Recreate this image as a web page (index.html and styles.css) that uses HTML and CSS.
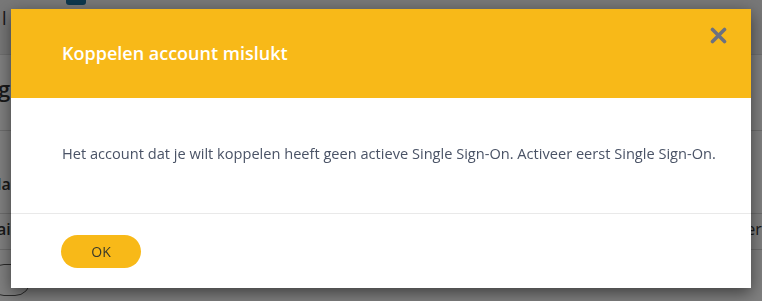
FILE: index.html
```html
<!DOCTYPE html>
<html lang="nl">
<head>
<meta charset="utf-8">
<title>Koppelen account mislukt</title>
<link rel="stylesheet" href="styles.css">
</head>
<body>
<div class="page">
  <div class="topbar">
    <span class="topbar-text">l</span>
    <span class="tab"></span>
  </div>
  <div class="page-title">gl</div>
  <div class="row row-line"></div>
  <div class="row row-label">la</div>
  <div class="row row-data"><span>ai</span><span>er.</span></div>
  <div class="row row-btn"><span class="ghost-btn">zi</span></div>
</div>

<div class="overlay">
  <div class="modal" role="dialog" aria-labelledby="modal-title">
    <div class="modal-header">
      <h2 id="modal-title" class="modal-title">Koppelen account mislukt</h2>
      <button class="close" aria-label="Sluiten">
        <svg width="17" height="17" viewBox="0 0 17 17" aria-hidden="true">
          <path d="M2.5 2.5 L14.5 14.5 M14.5 2.5 L2.5 14.5" stroke="#6c7180" stroke-width="3.6" stroke-linecap="round"/>
        </svg>
      </button>
    </div>
    <div class="modal-body">
      <p>Het account dat je wilt koppelen heeft geen actieve Single Sign-On. Activeer eerst Single Sign-On.</p>
    </div>
    <div class="modal-footer">
      <button class="btn-ok">OK</button>
    </div>
  </div>
</div>
</body>
</html>
```

FILE: styles.css
```css
* { box-sizing: border-box; }
html, body { margin: 0; height: 100%; }
body {
  font-family: "Open Sans", "Noto Sans", sans-serif;
  background: #ffffff;
  color: #333;
  overflow: hidden;
}

/* background page */
.page { display: flex; flex-direction: column; height: 100%; }
.topbar {
  height: 55px;
  background: #eeeeee;
  border-bottom: 1px solid #dddddd;
  display: flex;
  align-items: flex-start;
  padding-left: 2px;
}
.topbar-text { font-size: 18px; margin-top: 6px; color: #333; }
.tab { width: 20px; height: 5px; background: #1b6f99; margin-left: 59px; border-radius: 0 0 3px 3px; }
.page-title { font-size: 22px; font-weight: 600; padding: 18px 0 0 0; height: 76px; border-bottom: 1px solid #d8d8d8; margin-left: -2px; }
.row { border-bottom: 1px solid #d8d8d8; font-size: 16px; display: flex; justify-content: space-between; align-items: center; }
.row-line { height: 0; border: none; }
.row-label { height: 83px; font-weight: 600; margin-left: -3px; padding-top: 24px; }
.row-data { height: 36px; font-weight: 600; margin-left: -3px; padding-bottom: 6px; }
.row-data span:last-child { font-weight: 400; margin-right: -4px; }
.row-btn { border: none; padding-top: 14px; }
.ghost-btn { border: 1px solid #555; border-radius: 16px; padding: 4px 30px 6px 0; margin-left: -12px; font-size: 15px; }

/* overlay + modal */
.overlay {
  position: fixed;
  inset: 0;
  background: rgba(0, 0, 0, 0.5);
  padding: 9px 11px 0 11px;
}
.modal {
  width: 740px;
  height: 279px;
  background: #ffffff;
  display: flex;
  flex-direction: column;
  box-shadow: 0 5px 15px rgba(0, 0, 0, 0.5);
}
.modal-header {
  height: 89px;
  background: #f8b918;
  display: flex;
  align-items: flex-start;
  justify-content: space-between;
  padding: 0 24px 0 51px;
}
.modal-title {
  margin: 0;
  padding-top: 31px;
  font-size: 18px;
  font-weight: 600;
  color: #ffffff;
  line-height: 26px;
}
.close {
  margin-top: 18px;
  border: 0;
  background: none;
  padding: 0;
  width: 17px;
  height: 17px;
  cursor: pointer;
  display: block;
}
.close svg { display: block; }
.modal-body {
  height: 116px;
  display: flex;
  align-items: center;
  padding: 0 30px 0 51px;
  border-bottom: 1px solid #e9e9e9;
}
.modal-body p {
  margin: 0 0 6px 0;
  font-size: 14.6px;
  line-height: 20px;
  color: #4a5366;
  white-space: nowrap;
}
.modal-footer {
  flex: 1;
  display: flex;
  align-items: center;
  padding: 0 50px;
}
.btn-ok {
  width: 80px;
  height: 33px;
  border: 0;
  border-radius: 17px;
  background: #f8b918;
  font-family: "Open Sans", "Noto Sans", sans-serif;
  font-size: 14px;
  color: #3a3a2a;
  cursor: pointer;
  margin-top: 1px;
}
```
